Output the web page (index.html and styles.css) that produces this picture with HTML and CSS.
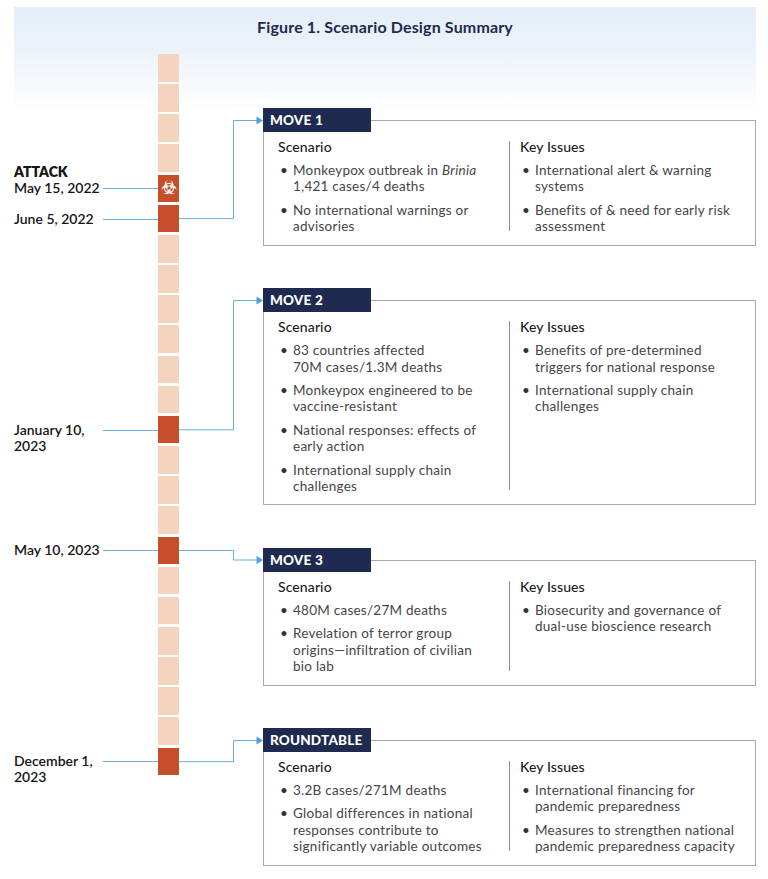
FILE: index.html
```html
<!DOCTYPE html>
<html lang="en">
<head>
<meta charset="utf-8">
<title>Figure 1. Scenario Design Summary</title>
<link rel="stylesheet" href="styles.css">
</head>
<body>
<div class="figure">
  <h1 class="title">Figure 1. Scenario Design Summary</h1>
  <div class="diagram">
    <div class="timeline">
      <div class="label attack"><div class="ltext"><b>ATTACK</b><br>May 15, 2022</div><span class="tick"></span></div>
      <div class="label row-6"><div class="ltext">June 5, 2022</div><span class="tick"></span></div>
      <div class="label row-13"><div class="ltext">January 10,<br>2023</div><span class="tick"></span></div>
      <div class="label row-17"><div class="ltext">May 10, 2023</div><span class="tick"></span></div>
      <div class="label row-24"><div class="ltext">December 1,<br>2023</div><span class="tick"></span></div>

      <svg class="connectors" viewBox="0 0 84 721.5" width="84" height="721.5" aria-hidden="true">
        <g fill="none" stroke="#6aaede" stroke-width="1">
          <path d="M0 164.6 H54.5 V66.5 H79"/>
          <path d="M0 375.8 H54.5 V246.5 H79"/>
          <path d="M0 496.5 H54.5 V506 H79"/>
          <path d="M0 707.7 H54.5 V686.5 H79"/>
        </g>
        <g fill="#4f9fdb">
          <polygon points="77.5,62.5 84,66.5 77.5,70.5"/>
          <polygon points="77.5,242.5 84,246.5 77.5,250.5"/>
          <polygon points="77.5,502 84,506 77.5,510"/>
          <polygon points="77.5,682.5 84,686.5 77.5,690.5"/>
        </g>
      </svg>

      <div class="seg"></div>
      <div class="seg"></div>
      <div class="seg"></div>
      <div class="seg"></div>
      <div class="seg dark bio">
        <svg class="biohazard" viewBox="-10 -10 20 20" width="18" height="18" aria-label="biohazard">
          <defs>
            <mask id="bh-mask" maskUnits="userSpaceOnUse" x="-10" y="-10" width="20" height="20">
              <rect x="-10" y="-10" width="20" height="20" fill="#fff"/>
              <g fill="#000">
                <circle cx="0" cy="-5.9" r="3"/>
                <circle cx="5.11" cy="2.95" r="3"/>
                <circle cx="-5.11" cy="2.95" r="3"/>
                <circle cx="0" cy="0" r="1.4"/>
              </g>
              <g fill="none" stroke="#000" stroke-width="0.55">
                <circle cx="0" cy="-3.5" r="5.3"/>
                <circle cx="3.03" cy="1.75" r="5.3"/>
                <circle cx="-3.03" cy="1.75" r="5.3"/>
              </g>
            </mask>
          </defs>
          <g fill="#fff" mask="url(#bh-mask)">
            <circle cx="0" cy="-3.5" r="5.3"/>
            <circle cx="3.03" cy="1.75" r="5.3"/>
            <circle cx="-3.03" cy="1.75" r="5.3"/>
          </g>
          <circle cx="0" cy="0" r="5.1" fill="none" stroke="#fff" stroke-width="1.3"/>
        </svg>
      </div>
      <div class="seg dark"></div>
      <div class="seg"></div>
      <div class="seg"></div>
      <div class="seg"></div>
      <div class="seg"></div>
      <div class="seg"></div>
      <div class="seg"></div>
      <div class="seg dark"></div>
      <div class="seg"></div>
      <div class="seg"></div>
      <div class="seg"></div>
      <div class="seg dark"></div>
      <div class="seg"></div>
      <div class="seg"></div>
      <div class="seg"></div>
      <div class="seg"></div>
      <div class="seg"></div>
      <div class="seg"></div>
      <div class="seg dark"></div>
    </div>

    <div class="moves">
      <section class="move">
        <div class="tab">MOVE 1</div>
        <div class="card">
          <div class="col">
            <h3>Scenario</h3>
            <ul>
              <li><span>Monkeypox outbreak in <em>Brinia</em><br>1,421 cases/4 deaths</span></li>
              <li><span>No international warnings or<br>advisories</span></li>
            </ul>
          </div>
          <div class="divider"></div>
          <div class="col right">
            <h3>Key Issues</h3>
            <ul>
              <li><span>International alert &amp; warning<br>systems</span></li>
              <li><span>Benefits of &amp; need for early risk<br>assessment</span></li>
            </ul>
          </div>
        </div>
      </section>

      <section class="move">
        <div class="tab">MOVE 2</div>
        <div class="card">
          <div class="col">
            <h3>Scenario</h3>
            <ul>
              <li><span>83 countries affected<br>70M cases/1.3M deaths</span></li>
              <li><span>Monkeypox engineered to be<br>vaccine-resistant</span></li>
              <li><span>National responses: effects of<br>early action</span></li>
              <li><span>International supply chain<br>challenges</span></li>
            </ul>
          </div>
          <div class="divider"></div>
          <div class="col right">
            <h3>Key Issues</h3>
            <ul>
              <li><span>Benefits of pre-determined<br>triggers for national response</span></li>
              <li><span>International supply chain<br>challenges</span></li>
            </ul>
          </div>
        </div>
      </section>

      <section class="move">
        <div class="tab">MOVE 3</div>
        <div class="card">
          <div class="col">
            <h3>Scenario</h3>
            <ul>
              <li><span>480M cases/27M deaths</span></li>
              <li><span>Revelation of terror group<br>origins—infiltration of civilian<br>bio lab</span></li>
            </ul>
          </div>
          <div class="divider"></div>
          <div class="col right">
            <h3>Key Issues</h3>
            <ul>
              <li><span>Biosecurity and governance of<br>dual-use bioscience research</span></li>
            </ul>
          </div>
        </div>
      </section>

      <section class="move">
        <div class="tab">ROUNDTABLE</div>
        <div class="card">
          <div class="col">
            <h3>Scenario</h3>
            <ul>
              <li><span>3.2B cases/271M deaths</span></li>
              <li><span>Global differences in national<br>responses contribute to<br>significantly variable outcomes</span></li>
            </ul>
          </div>
          <div class="divider"></div>
          <div class="col right">
            <h3>Key Issues</h3>
            <ul>
              <li><span>International financing for<br>pandemic preparedness</span></li>
              <li><span>Measures to strengthen national<br>pandemic preparedness capacity</span></li>
            </ul>
          </div>
        </div>
      </section>
    </div>
  </div>
</div>
</body>
</html>
```

FILE: styles.css
```css
* { box-sizing: border-box; }

html, body {
  margin: 0;
  padding: 0;
  background: #ffffff;
}

body {
  font-family: Lato, "Open Sans", "Liberation Sans", sans-serif;
  color: #333;
  padding-top: 7px;
}

.figure {
  margin: 0 12px 0 14px;
  width: 742px;
  background: linear-gradient(to bottom, #e4edf8 0px, #edf3fa 45px, #fafcfe 90px, #ffffff 105px);
  padding-top: 10px;
}

.title {
  margin: 0;
  text-align: center;
  font-size: 16px;
  line-height: 20px;
  font-weight: 700;
  color: #1f2b4d;
  letter-spacing: 0.15px;
}

.diagram {
  display: flex;
  align-items: flex-start;
  margin-top: 17px;
}

/* ---------- timeline ---------- */
.timeline {
  display: grid;
  grid-template-columns: 144px 21px 84px;
  grid-template-rows: repeat(24, 27.6px);
  row-gap: 2.57px;
  flex-shrink: 0;
}

.seg {
  grid-column: 2;
  background: #f3d5bf;
  display: flex;
  align-items: center;
  justify-content: center;
  overflow: hidden;
}

.seg.dark {
  background: #c64f2b;
}

.biohazard {
  display: block;
}

.connectors {
  grid-column: 3;
  grid-row: 1 / -1;
  display: block;
}

.label {
  grid-column: 1;
  display: flex;
  align-items: flex-start;
  align-self: start;
  margin-top: 5.8px;
  font-size: 14px;
  line-height: 16px;
  font-weight: 600;
  color: #151515;
}

.label .ltext {
  width: 89px;
  flex-shrink: 0;
  white-space: nowrap;
}

.label .ltext b {
  font-weight: 800;
}

.label .tick {
  flex: 1;
  height: 1px;
  background: #6aaede;
  margin-top: 8px;
}

.label.attack {
  grid-row: 4 / 6;
  align-self: end;
  align-items: flex-end;
  margin-top: 0;
  margin-bottom: 5.8px;
}

.label.attack .tick {
  margin-top: 0;
  margin-bottom: 7.5px;
}

.row-6 { grid-row: 6; }
.row-13 { grid-row: 13; }
.row-17 { grid-row: 17; }
.row-24 { grid-row: 24; }

/* ---------- move cards ---------- */
.moves {
  width: 493px;
  padding-top: 54px;
  display: flex;
  flex-direction: column;
  gap: 42.5px;
}

.tab {
  position: relative;
  z-index: 1;
  width: 108px;
  height: 24px;
  background: #1e2a50;
  color: #ffffff;
  font-size: 13.5px;
  font-weight: 900;
  line-height: 25px;
  padding-left: 7px;
  letter-spacing: 0.2px;
}

.card {
  margin-top: -12px;
  border: 1px solid #a5a9bf;
  background: #ffffff;
  padding: 17px 8px 10px 14px;
  display: grid;
  grid-template-columns: 231px 1px 1fr;
}

.divider {
  background: #8e919b;
  margin: 3px 0 4px;
}

.col.right {
  padding-left: 10px;
}

.col h3 {
  margin: 0 0 6px;
  font-size: 14px;
  line-height: 18px;
  font-weight: 500;
  color: #1c1c1c;
  letter-spacing: 0.1px;
}

.col ul {
  list-style: none;
  margin: 0;
  padding: 0;
}

.col li {
  display: flex;
  font-size: 13.5px;
  line-height: 16.4px;
  letter-spacing: 0.25px;
  color: #454545;
  white-space: nowrap;
}

.col li + li {
  margin-top: 7px;
}

.col li::before {
  content: "•";
  width: 13px;
  padding-left: 2px;
  flex-shrink: 0;
  color: #333;
}

.col li em {
  font-style: italic;
}
```
